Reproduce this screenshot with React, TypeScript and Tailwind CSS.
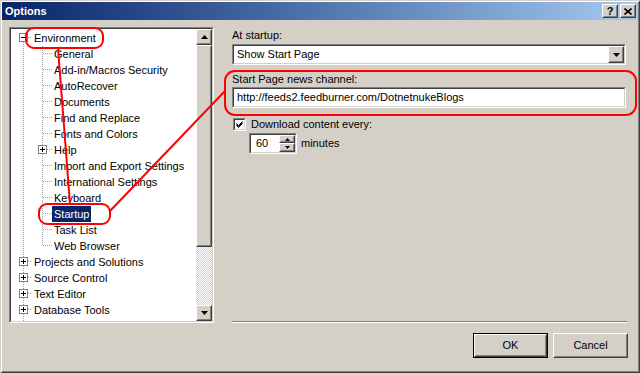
import React from 'react';

type TreeRow = {
  label: string;
  level: 0 | 1;
  box?: 'plus' | 'minus';
  first?: boolean;
  last?: boolean;
  selected?: boolean;
};

const rows: TreeRow[] = [
  { label: 'Environment', level: 0, box: 'minus', first: true },
  { label: 'General', level: 1 },
  { label: 'Add-in/Macros Security', level: 1 },
  { label: 'AutoRecover', level: 1 },
  { label: 'Documents', level: 1 },
  { label: 'Find and Replace', level: 1 },
  { label: 'Fonts and Colors', level: 1 },
  { label: 'Help', level: 1, box: 'plus' },
  { label: 'Import and Export Settings', level: 1 },
  { label: 'International Settings', level: 1 },
  { label: 'Keyboard', level: 1 },
  { label: 'Startup', level: 1, selected: true },
  { label: 'Task List', level: 1 },
  { label: 'Web Browser', level: 1, last: true },
  { label: 'Projects and Solutions', level: 0, box: 'plus' },
  { label: 'Source Control', level: 0, box: 'plus' },
  { label: 'Text Editor', level: 0, box: 'plus' },
  { label: 'Database Tools', level: 0, box: 'plus' },
  // next node is scrolled out of view, only its connector shows
  { label: '', level: 0, box: 'plus' },
];

const dot = { stroke: '#a0a0a0', strokeDasharray: '1 1' };

function ExpandBox({ x, kind }: { x: number; kind: 'plus' | 'minus' }) {
  return (
    <g>
      <rect x={x + 0.5} y={3.5} width={8} height={8} fill="#fff" stroke="#808080" />
      <line x1={x + 2} y1={7.5} x2={x + 7} y2={7.5} stroke="#000" />
      {kind === 'plus' && <line x1={x + 4.5} y1={5} x2={x + 4.5} y2={10} stroke="#000" />}
    </g>
  );
}

function TreeLines({ row }: { row: TreeRow }) {
  if (row.level === 0) {
    return (
      <svg width="21" height="16" className="shrink-0">
        <line x1="12.5" y1={row.first ? 8 : 0} x2="12.5" y2="16" {...dot} />
        <line x1="17" y1="7.5" x2="21" y2="7.5" {...dot} />
        {row.box && <ExpandBox x={8} kind={row.box} />}
      </svg>
    );
  }
  return (
    <svg width="41" height="16" className="shrink-0">
      <line x1="12.5" y1="0" x2="12.5" y2="16" {...dot} />
      <line x1="31.5" y1="0" x2="31.5" y2={row.last ? 8 : 16} {...dot} />
      <line x1={row.box ? 36 : 32} y1="7.5" x2="41" y2="7.5" {...dot} />
      {row.box && <ExpandBox x={27} kind={row.box} />}
    </svg>
  );
}

// raised 3d edge, win2000 style
function Raised({ className = '', children }: { className?: string; children?: React.ReactNode }) {
  return (
    <div className={`border border-t-white border-l-white border-r-[#404040] border-b-[#404040] bg-[#d4d0c8] ${className}`}>
      <div className="w-full h-full border border-t-[#d4d0c8] border-l-[#d4d0c8] border-r-[#808080] border-b-[#808080] flex items-center justify-center">
        {children}
      </div>
    </div>
  );
}

function Sunken({ className = '', children }: { className?: string; children?: React.ReactNode }) {
  return (
    <div className={`border border-t-[#808080] border-l-[#808080] border-r-white border-b-white ${className}`}>
      <div className="w-full h-full border border-t-[#404040] border-l-[#404040] border-r-[#d4d0c8] border-b-[#d4d0c8] bg-white flex overflow-hidden">
        {children}
      </div>
    </div>
  );
}

const ArrowDown = () => (
  <svg width="7" height="4"><polygon points="0,0 7,0 3.5,4" fill="#000" /></svg>
);
const ArrowUp = () => (
  <svg width="7" height="4"><polygon points="0,4 7,4 3.5,0" fill="#000" /></svg>
);

export default function App() {
  return (
    <div
      className="relative w-[640px] h-[373px] bg-[#d4d0c8] text-[11px] leading-[13px] text-black flex flex-col shadow-[inset_1px_1px_#d4d0c8,inset_-1px_-1px_#404040,inset_2px_2px_#ffffff,inset_-2px_-2px_#808080]"
      style={{ fontFamily: '"Liberation Sans", Arial, sans-serif' }}
    >
      {/* Title bar */}
      <div className="mx-[2px] mt-[2px] h-[18px] flex items-center bg-gradient-to-r from-[#0a246a] to-[#a6caf0] pl-[3px] pr-[2px]">
        <span className="text-white font-bold text-[11px]">Options</span>
        <div className="ml-auto flex items-center">
          <Raised className="w-[16px] h-[14px]">
            <span className="font-bold text-[11px] leading-none">?</span>
          </Raised>
          <Raised className="w-[16px] h-[14px] ml-[2px]">
            <svg width="8" height="7">
              <path d="M0.5,0.5 L7.5,6.5 M7.5,0.5 L0.5,6.5" stroke="#000" strokeWidth="1.6" />
            </svg>
          </Raised>
        </div>
      </div>

      {/* Body */}
      <div className="flex mt-[7px] pl-[9px] h-[296px]">
        {/* Tree */}
        <Sunken className="w-[205px] h-[296px] shrink-0">
          <div className="flex-1 pt-[1px] overflow-hidden">
            {rows.map((row, i) => (
              <div key={i} className="flex h-[16px] items-center whitespace-nowrap">
                <TreeLines row={row} />
                {row.label && (
                  <span
                    className={`px-[2px] h-[16px] leading-[16px] ${row.selected ? 'bg-[#0a246a] text-white' : ''}`}
                  >
                    {row.label}
                  </span>
                )}
              </div>
            ))}
          </div>
          {/* Scrollbar */}
          <div className="w-[16px] flex flex-col bg-[conic-gradient(#ffffff_25%,#d4d0c8_0_50%,#ffffff_0_75%,#d4d0c8_0)] bg-[length:2px_2px]">
            <Raised className="w-[16px] h-[16px]"><ArrowUp /></Raised>
            <Raised className="w-[16px] h-[202px]" />
            <Raised className="w-[16px] h-[16px] mt-auto"><ArrowDown /></Raised>
          </div>
        </Sunken>

        {/* Right panel */}
        <div className="ml-[18px] w-[395px] flex flex-col">
          <div className="mt-[2px]">At startup:</div>
          <Sunken className="mt-[2px] w-[394px] h-[21px]">
            <div className="flex-1 pl-[3px] leading-[17px]">Show Start Page</div>
            <Raised className="w-[16px] h-[17px]"><ArrowDown /></Raised>
          </Sunken>

          <div className="mt-[8px]">Start Page news channel:</div>
          <Sunken className="mt-[1px] w-[394px] h-[21px]">
            <div className="flex-1 pl-[3px] leading-[17px]">http://feeds2.feedburner.com/DotnetnukeBlogs</div>
          </Sunken>

          <div className="flex items-center mt-[10px] ml-[1px]">
            <Sunken className="w-[13px] h-[13px]">
              <svg width="9" height="9" className="shrink-0">
                <path d="M1.5,3.5 L3.5,5.5 L7.5,1.5 M1.5,4.5 L3.5,6.5 L7.5,2.5 M1.5,5.5 L3.5,7.5 L7.5,3.5" stroke="#000" fill="none" />
              </svg>
            </Sunken>
            <span className="ml-[5px]">Download content every:</span>
          </div>

          <div className="flex items-center mt-[2px] ml-[17px]">
            <Sunken className="w-[48px] h-[21px]">
              <div className="flex-1 pl-[5px] leading-[17px]">60</div>
              <div className="flex flex-col">
                <Raised className="w-[16px] h-[8px]">
                  <svg width="5" height="3"><polygon points="0,3 5,3 2.5,0" fill="#000" /></svg>
                </Raised>
                <Raised className="w-[16px] h-[9px]">
                  <svg width="5" height="3"><polygon points="0,0 5,0 2.5,3" fill="#000" /></svg>
                </Raised>
              </div>
            </Sunken>
            <span className="ml-[4px]">minutes</span>
          </div>

          {/* separator */}
          <div className="mt-auto border-t border-t-[#808080] border-b border-b-white" />
        </div>
      </div>

      {/* Buttons */}
      <div className="flex justify-end mt-[10px] pr-[12px] gap-[5px]">
        <div className="border border-black">
          <Raised className="w-[73px] h-[23px]">OK</Raised>
        </div>
        <Raised className="w-[75px] h-[25px]">Cancel</Raised>
      </div>

      {/* red annotations */}
      <svg className="absolute inset-0 pointer-events-none" width="640" height="373">
        <g fill="none" stroke="#ff0000" strokeWidth="2">
          <rect x="26" y="28" width="77" height="20" rx="8" />
          <rect x="39" y="204" width="71" height="20" rx="8" />
          <rect x="225" y="71" width="411" height="44" rx="10" />
          <line x1="58" y1="48" x2="70" y2="204" />
          <line x1="110" y1="211" x2="225" y2="91" />
        </g>
      </svg>
    </div>
  );
}
